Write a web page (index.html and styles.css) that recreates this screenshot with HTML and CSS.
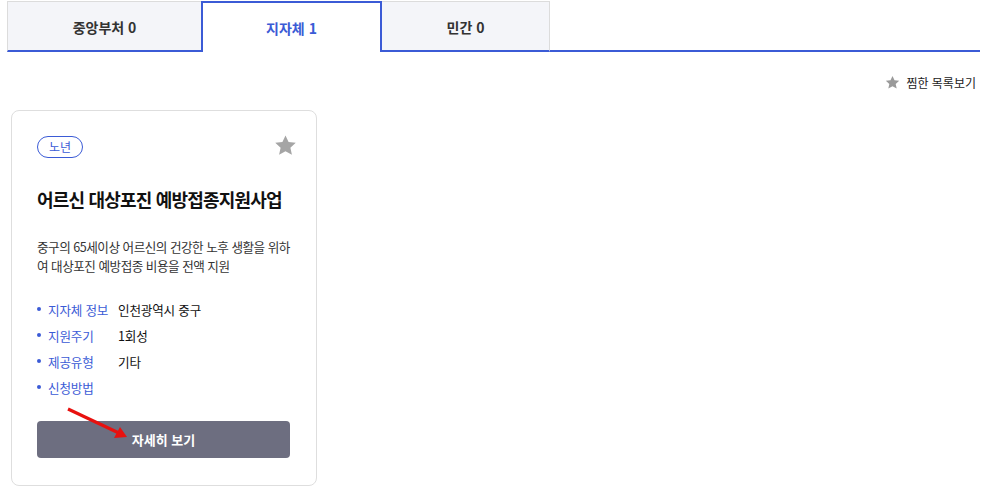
FILE: index.html
```html
<!DOCTYPE html>
<html lang="ko">
<head>
<meta charset="utf-8">
<link rel="stylesheet" href="styles.css">
</head>
<body>
<div class="page">
  <div class="tabs">
    <div class="tab tab-1">중앙부처 0</div>
    <div class="tab tab-2 active">지자체 1</div>
    <div class="tab tab-3">민간 0</div>
    <div class="tab-rest"></div>
  </div>
  <div class="toolbar">
    <a class="fav-link">
      <svg class="fav-star" viewBox="0 0 24 24" width="15" height="15"><path d="M12 1.5l3.2 6.9 7.5.8-5.6 5.1 1.6 7.4L12 17.9l-6.7 3.8 1.6-7.4L1.3 9.2l7.5-.8z" fill="#9a9a9a"/></svg>
      <span>찜한 목록보기</span>
    </a>
  </div>
  <div class="cards">
    <div class="card">
      <div class="card-head">
        <span class="badge">노년</span>
        <svg class="star" viewBox="0 0 24 24" width="23" height="23"><path d="M12 1.5l3.2 6.9 7.5.8-5.6 5.1 1.6 7.4L12 17.9l-6.7 3.8 1.6-7.4L1.3 9.2l7.5-.8z" fill="#a5a5a5"/></svg>
      </div>
      <h2 class="title">어르신 대상포진 예방접종지원사업</h2>
      <p class="desc">중구의 65세이상 어르신의 건강한 노후 생활을 위하여 대상포진 예방접종 비용을 전액 지원</p>
      <ul class="info">
        <li><span class="label">지자체 정보</span><span class="value">인천광역시 중구</span></li>
        <li><span class="label">지원주기</span><span class="value">1회성</span></li>
        <li><span class="label">제공유형</span><span class="value">기타</span></li>
        <li><span class="label">신청방법</span><span class="value"></span></li>
      </ul>
      <div class="btn-wrap">
        <button class="detail-btn">자세히 보기</button>
        <svg class="arrow" viewBox="0 0 70 36" width="70" height="36"><line x1="3" y1="3" x2="56" y2="28" stroke="#e8110f" stroke-width="3.2"/><path d="M62 31 L49 32 L55 21 Z" fill="#e8110f"/></svg>
      </div>
    </div>
  </div>
</div>
</body>
</html>
```
FILE: styles.css
```css
* { box-sizing: border-box; }
html, body { margin: 0; padding: 0; background: #fff; }
body {
  font-family: "Noto Sans CJK KR", "Noto Sans", sans-serif;
  color: #111;
}
.page { padding: 1px 2px 0 7px; }
.tabs { display: flex; height: 51px; }
.tab {
  display: flex; align-items: center; justify-content: center;
  background: #f4f5f9;
  border-top: 1px solid #dcdcdc;
  border-bottom: 2px solid #3b5bd6;
  font-size: 14px; font-weight: 700; color: #333;
  padding-top: 1px;
}
.tab-1 { width: 194px; border-left: 1px solid #dcdcdc; }
.tab-2 { width: 181px; }
.tab-3 { width: 168px; border-right: 1px solid #dcdcdc; }
.tab.active {
  background: #fff; color: #3b5bd6;
  border: 2px solid #3b5bd6; border-bottom: none;
}
.tab-rest { flex: 1; border-bottom: 2px solid #3b5bd6; }
.toolbar { display: flex; justify-content: flex-end; padding: 22px 4px 0 0; height: 58px; }
.fav-link { display: flex; align-items: center; gap: 6px; font-size: 12px; color: #222; height: 17px; }
.cards { padding: 0 0 0 4px; }
.card {
  width: 306px; height: 376px;
  border: 1px solid #dedede; border-radius: 8px;
  padding: 25px 25px 0 25px;
}
.card-head { display: flex; justify-content: space-between; align-items: center; height: 22px; }
.badge {
  display: inline-flex; align-items: center; justify-content: center;
  height: 22px; padding: 0 11px;
  border: 1px solid #3b5bd6; border-radius: 11px;
  color: #3b5bd6; font-size: 12px; line-height: 1;
}
.star { margin-right: -6px; margin-top: -3px; }
.title { margin: 28px 0 0; font-size: 18px; font-weight: 700; line-height: 26px; letter-spacing: -0.8px; white-space: nowrap; }
.desc { margin: 25px 0 0; font-size: 12.6px; line-height: 19px; color: #333; letter-spacing: -0.5px; margin-right: -4px; }
.info { list-style: none; margin: 21px 0 0; padding: 0; }
.info li { display: flex; height: 26px; align-items: center; font-size: 12.6px; position: relative; padding-left: 11px; letter-spacing: -0.2px; }
.info li::before {
  content: ""; position: absolute; left: 0; top: 11px;
  width: 4px; height: 4px; border-radius: 50%; background: #3b5bd6;
}
.label { width: 70px; color: #3b5bd6; }
.value { color: #111; }
.btn-wrap { position: relative; margin-top: 21px; }
.detail-btn {
  display: block; width: 253px; height: 37px;
  background: #6d6e80; color: #fff; border: none; border-radius: 4px;
  font-family: inherit; font-size: 13px; font-weight: 700;
}
.arrow { position: absolute; left: 28px; top: -15px; }
```
